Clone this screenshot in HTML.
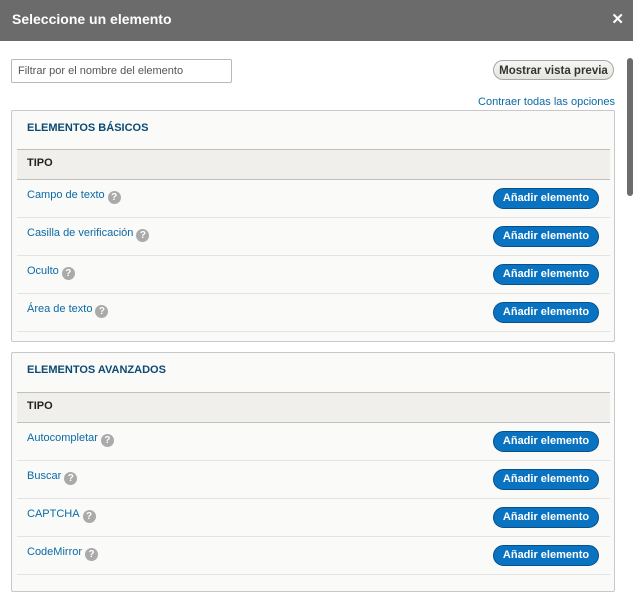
<!DOCTYPE html><html><head><style>
body{margin:0;width:633px;height:571px;overflow:hidden;background:#fff;font-family:"Liberation Sans",sans-serif;position:relative}
.hdr{position:absolute;left:0;top:0;width:633px;height:41px;background:#6b6b6b;color:#fff;font-weight:bold;font-size:14px}
.hdr .t{position:absolute;left:12px;top:11px}
.hdr .x{position:absolute;right:9px;top:10px;font-size:15px}
.inp{position:absolute;left:11px;top:59px;width:219px;height:22px;border:1px solid #b8b8b8;border-radius:2px;font-size:11px;color:#555;line-height:22px;padding-left:6px;box-sizing:border-box;width:221px;height:24px}
.prev{position:absolute;left:493px;top:60px;width:121px;height:20px;border:1px solid #a6a6a6;border-radius:11px;background:linear-gradient(#f6f6f3,#e4e3df);font-size:11.5px;font-weight:bold;color:#333;text-align:center;line-height:20px;box-sizing:border-box}
.lnk{position:absolute;right:18px;top:96px;font-size:11px;color:#0a6aa6}
.fs{position:absolute;left:11px;width:604px;border:1px solid #c8c8c8;border-radius:2px;background:#fafaf9;box-sizing:border-box}
.lg{position:absolute;left:15px;font-size:11px;font-weight:bold;color:#0b4a72}
.th{position:absolute;left:5px;width:593px;height:31px;background:#f0efec;border-top:1px solid #bfbfbf;border-bottom:1px solid #bfbfbf;box-sizing:border-box;font-size:11px;font-weight:bold;color:#222;padding:7px 0 0 10px}
.row{position:absolute;left:5px;width:593px;height:38px;border-bottom:1px solid #e3e3e1;box-sizing:border-box}
.row .n{position:absolute;left:10px;top:9px;font-size:11px;color:#0a6aa6}
.q{display:inline-block;width:13px;height:13px;border-radius:50%;background:#aaa;color:#fff;font-size:10px;font-weight:bold;text-align:center;line-height:13px;vertical-align:-2px;margin-left:3px}
.b{position:absolute;left:476px;top:8px;width:106px;height:21px;border-radius:11px;background:#0a73c1;border:1px solid #07508a;box-sizing:border-box;color:#fff;font-size:11px;font-weight:bold;text-align:center;line-height:19px}
.sb{position:absolute;left:627px;top:58px;width:6px;height:138px;background:#6c6c6c;border-radius:3px}
</style></head><body>
<div class="hdr"><span class="t">Seleccione un elemento</span><span class="x">✕</span></div>
<div class="sb"></div>
<div class="inp">Filtrar por el nombre del elemento</div>
<div class="prev">Mostrar vista previa</div>
<div class="lnk">Contraer todas las opciones</div>
<div class="fs" style="top:110px;height:232px">
<div class="lg" style="top:11px">ELEMENTOS BÁSICOS</div>
<div class="th" style="top:38px">TIPO</div>
<div class="row" style="top:69px"><span class="n">Campo de texto<span class="q">?</span></span><span class="b">Añadir elemento</span></div>
<div class="row" style="top:107px"><span class="n">Casilla de verificación<span class="q">?</span></span><span class="b">Añadir elemento</span></div>
<div class="row" style="top:145px"><span class="n">Oculto<span class="q">?</span></span><span class="b">Añadir elemento</span></div>
<div class="row" style="top:183px"><span class="n">Área de texto<span class="q">?</span></span><span class="b">Añadir elemento</span></div>
</div>
<div class="fs" style="top:352px;height:240px">
<div class="lg" style="top:11px">ELEMENTOS AVANZADOS</div>
<div class="th" style="top:39px">TIPO</div>
<div class="row" style="top:70px"><span class="n">Autocompletar<span class="q">?</span></span><span class="b">Añadir elemento</span></div>
<div class="row" style="top:108px"><span class="n">Buscar<span class="q">?</span></span><span class="b">Añadir elemento</span></div>
<div class="row" style="top:146px"><span class="n">CAPTCHA<span class="q">?</span></span><span class="b">Añadir elemento</span></div>
<div class="row" style="top:184px"><span class="n">CodeMirror<span class="q">?</span></span><span class="b">Añadir elemento</span></div>
</div>
</body></html>
